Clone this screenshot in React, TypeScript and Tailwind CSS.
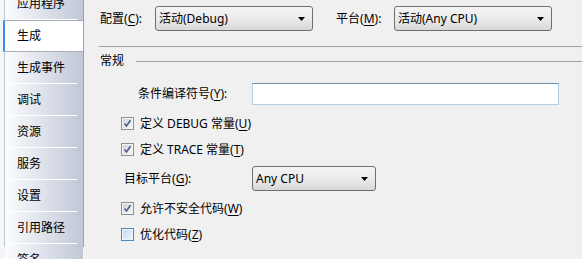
import React from "react";

const FONT = { fontFamily: "'Noto Sans', 'Noto Sans CJK SC', sans-serif" };

function Acc({ pre, k, post = "" }: { pre: string; k: string; post?: string }) {
  return (
    <span className="whitespace-nowrap">
      {pre}(<span className="underline underline-offset-[2px]">{k}</span>){post}
    </span>
  );
}

function Arrow() {
  return (
    <svg width="7" height="4" viewBox="0 0 7 4" className="shrink-0">
      <path d="M0 0 H7 L3.5 4 Z" fill="#000" />
    </svg>
  );
}

function Select({ text, w }: { text: string; w: string }) {
  return (
    <div
      className={`${w} h-[25px] shrink-0 rounded-[3px] border border-[#707070] bg-linear-to-b from-[#f5f5f5] via-[#ebebeb] to-[#d8d8d8] flex items-center pl-[3px] pr-[7px]`}
    >
      <span className="flex-1 whitespace-nowrap">{text}</span>
      <Arrow />
    </div>
  );
}

function Check({ checked }: { checked: boolean }) {
  if (checked) {
    return (
      <div className="w-[13px] h-[13px] shrink-0 border border-[#8e8f8f] bg-[#f4f4f4] p-[1px]">
        <div className="w-full h-full bg-linear-to-br from-[#cfd3d9] to-[#f7f7f7] relative">
          <svg width="9" height="9" viewBox="0 0 9 9" className="absolute left-0 top-0">
            <path d="M1.5 4.5 L3.5 7 L7.5 1.2" fill="none" stroke="#4d5f8f" strokeWidth="1.6" />
          </svg>
        </div>
      </div>
    );
  }
  return (
    <div className="w-[13px] h-[13px] shrink-0 border border-[#5a86b5] bg-[#eef5fc] p-[1px]">
      <div className="w-full h-full bg-linear-to-br from-[#c5dcf2] to-[#eaf3fc]" />
    </div>
  );
}

const tabs = ["应用程序", "生成", "生成事件", "调试", "资源", "服务", "设置", "引用路径", "签名"];

export default function App() {
  return (
    <div
      className="w-[582px] h-[259px] overflow-hidden flex bg-[#f0f0f0] text-[12px] text-black leading-none"
      style={FONT}
    >
      {/* sidebar */}
      <div className="w-[84px] h-[259px] shrink-0 bg-[#f5f6f8] pl-[4px] overflow-hidden">
        <div className="h-full border-l border-[#c3c7cf] border-r border-r-[#a0a0a0] flex flex-col -mt-[12px]">
          {tabs.map((t, i) =>
            i === 1 ? (
              <div
                key={t}
                className="h-[32px] shrink-0 bg-white border-y border-[#a8acb4] -ml-[2px] border-l-[2px] border-l-[#3a8ee6] flex items-center pl-[12px]"
              >
                {t}
              </div>
            ) : (
              <div
                key={t}
                className="h-[32px] shrink-0 flex flex-col bg-linear-to-r from-[#fbfcfd] to-[#c1c7d7]"
              >
                <div className="flex-1 flex items-center pl-[12px]">{t}</div>
                <div className="h-px w-[68px] ml-[4px] bg-white" />
              </div>
            )
          )}
        </div>
      </div>

      {/* main */}
      <div className="flex-1 flex flex-col pt-[6px] pl-[15px]">
        <div className="h-[25px] flex items-center">
          <div className="w-[56px] pl-[1px]">
            <Acc pre="配置" k="C" post=":" />
          </div>
          <Select text="活动(Debug)" w="w-[158px]" />
          <div className="w-[58px] ml-[23px]">
            <Acc pre="平台" k="M" post=":" />
          </div>
          <Select text="活动(Any CPU)" w="w-[158px]" />
        </div>

        <div className="mt-[15px] h-px bg-[#a0a0a0]" />

        <div className="mt-[7px] h-[14px] flex items-center">
          <span className="pl-[1px]">常规</span>
          <div className="flex-1 ml-[12px] h-px bg-[#a0a0a0]" />
        </div>

        <div className="mt-[15px] h-[22px] flex items-center">
          <div className="w-[153px] pl-[39px]">
            <Acc pre="条件编译符号" k="Y" post=":" />
          </div>
          <div className="w-[307px] h-[22px] bg-white border border-[#b0d0ea] border-t-[#6a8fb5]" />
        </div>

        <div className="mt-[12px] h-[13px] flex items-center pl-[22px]">
          <Check checked />
          <span className="ml-[6px]">
            <Acc pre="定义 DEBUG 常量" k="U" />
          </span>
        </div>

        <div className="mt-[13px] h-[13px] flex items-center pl-[22px]">
          <Check checked />
          <span className="ml-[6px]">
            <Acc pre="定义 TRACE 常量" k="T" />
          </span>
        </div>

        <div className="mt-[10px] h-[25px] flex items-center">
          <div className="w-[153px] pl-[25px]">
            <Acc pre="目标平台" k="G" post=":" />
          </div>
          <Select text="Any CPU" w="w-[124px]" />
        </div>

        <div className="mt-[11px] h-[13px] flex items-center pl-[22px]">
          <Check checked />
          <span className="ml-[6px]">
            <Acc pre="允许不安全代码" k="W" />
          </span>
        </div>

        <div className="mt-[13px] h-[13px] flex items-center pl-[22px]">
          <Check checked={false} />
          <span className="ml-[6px]">
            <Acc pre="优化代码" k="Z" />
          </span>
        </div>
      </div>
    </div>
  );
}
